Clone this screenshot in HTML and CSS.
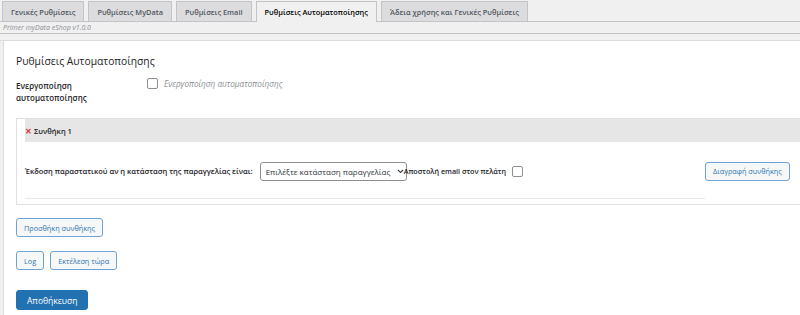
FILE: index.html
```html
<!DOCTYPE html>
<html lang="el">
<head>
    <meta charset="UTF-8">
    <title>Primer myData eShop</title>
    <link rel="stylesheet" href="styles.css">
</head>
<body>
    <nav class="tabs">
        <a class="tab">Γενικές Ρυθμίσεις</a>
        <a class="tab">Ρυθμίσεις MyData</a>
        <a class="tab">Ρυθμίσεις Email</a>
        <a class="tab active">Ρυθμίσεις Αυτοματοποίησης</a>
        <a class="tab">Άδεια χρήσης και Γενικές Ρυθμίσεις</a>
    </nav>
    <div class="version">Primer myData eShop v1.0.0</div>
    <div class="notice-bar"></div>

    <div class="panel">
        <h2>Ρυθμίσεις Αυτοματοποίησης</h2>

        <div class="field-row">
            <div class="field-label">Ενεργοποίηση<br>αυτοματοποίησης</div>
            <label class="field-check"><span class="checkbox"></span> Ενεργοποίηση αυτοματοποίησης</label>
        </div>

        <div class="condition">
            <div class="condition-head"><span class="remove">✕</span> Συνθήκη 1</div>
            <div class="condition-body">
                <span class="cond-label">Έκδοση παραστατικού αν η κατάσταση της παραγγελίας είναι:</span>
                <div class="select">Επιλέξτε κατάσταση παραγγελίας
                    <svg class="caret" width="7" height="5" viewBox="0 0 7 5"><path d="M1 1l2.5 2.5 2.5-2.5" fill="none" stroke="#3c434a" stroke-width="1.1"/></svg>
                </div>
                <span class="email-label">Αποστολή email στον πελάτη</span>
                <span class="checkbox"></span>
                <button class="btn btn-delete">Διαγραφή συνθήκης</button>
            </div>
            <div class="condition-line"></div>
        </div>

        <div class="actions">
            <button class="btn">Προσθήκη συνθήκης</button>
        </div>
        <div class="actions">
            <button class="btn">Log</button>
            <button class="btn">Εκτέλεση τώρα</button>
        </div>
        <div class="actions">
            <button class="btn btn-primary">Αποθήκευση</button>
        </div>
    </div>
</body>
</html>
```

FILE: styles.css
```css
body {
    margin: 0;
    background: #f0f0f1;
    font-family: "Open Sans", "Noto Sans", sans-serif;
    font-size: 8px;
    color: #1d2327;
    overflow: hidden;
    white-space: nowrap;
}
.tabs {
    display: flex;
    gap: 4px;
    padding: 1px 0 0 2px;
    border-bottom: 1px solid #c3c4c7;
    height: 20px;
}
.tab {
    display: flex;
    align-items: center;
    padding: 0 8px;
    background: #dcdcde;
    border: 1px solid #c3c4c7;
    border-bottom: none;
    color: #50575e;
    font-size: 7.4px;
    font-weight: 600;
}
.tab.active {
    background: #f0f0f1;
    color: #000;
    margin-bottom: -1px;
}
.version {
    font-size: 7px;
    font-style: italic;
    color: #8c8f94;
    padding: 1px 0 0 3px;
    height: 10px;
}
.notice-bar {
    border-top: 1px solid #c3c4c7;
    border-bottom: 1px solid #dcdcde;
    height: 6px;
}
.panel {
    background: #fff;
    margin-left: 3px;
    border-left: 1px solid #dcdcde;
    padding: 13px 0 40px 12px;
    min-height: 300px;
}
h2 {
    margin: 0 0 9px;
    font-size: 10.3px;
    font-weight: 400;
    color: #1d2327;
}
.field-row {
    display: flex;
    margin-bottom: 14px;
}
.field-label {
    width: 131px;
    font-weight: 600;
    line-height: 12px;
    padding-top: 3px;
}
.field-check {
    display: flex;
    align-items: center;
    gap: 6px;
    color: #8c8f94;
    font-style: italic;
    font-size: 8.2px;
    height: 12px;
}
.checkbox {
    display: inline-block;
    width: 9px;
    height: 9px;
    border: 1px solid #8c8f94;
    border-radius: 2px;
    background: #fff;
}
.condition {
    border: 1px solid #e0e0e0;
    border-right: none;
    padding: 0 0 5px 8px;
    margin-bottom: 13px;
}
.condition-head {
    background: #e6e6e6;
    height: 23px;
    display: flex;
    align-items: center;
    gap: 2px;
    font-weight: 600;
    font-size: 7.5px;
}
.remove {
    color: #d63638;
    font-size: 8px;
    font-weight: 700;
}
.condition-body {
    display: flex;
    align-items: center;
    height: 54px;
    padding-top: 2px;
}
.cond-label {
    font-weight: 600;
    font-size: 7.5px;
    margin-right: 7px;
}
.select {
    display: flex;
    align-items: center;
    justify-content: space-between;
    width: 138px;
    height: 17px;
    padding: 0 2px 0 5px;
    border: 1px solid #8c8f94;
    border-radius: 3px;
    color: #2c3338;
    font-size: 8px;
}
.caret {
    margin-left: 2px;
}
.email-label {
    margin-left: -3px;
    font-weight: 600;
    font-size: 7.2px;
    margin-right: 6px;
}
.btn {
    font-family: inherit;
    font-size: 7.3px;
    color: #2f76b5;
    background: #f6f7f7;
    border: 1px solid #6fa2d2;
    border-radius: 3px;
    height: 19px;
    padding: 0 7px;
    cursor: pointer;
}
.btn-delete {
    margin-left: 182px;
}
.condition-line {
    border-top: 1px solid #e8e8e8;
    width: 680px;
}
.actions {
    display: flex;
    gap: 6px;
    margin-bottom: 14px;
}
.btn-primary {
    background: #2271b1;
    border-color: #2271b1;
    color: #fff;
    font-size: 8.5px;
    height: 20px;
    padding: 0 10px;
    margin-top: 6px;
}
```
